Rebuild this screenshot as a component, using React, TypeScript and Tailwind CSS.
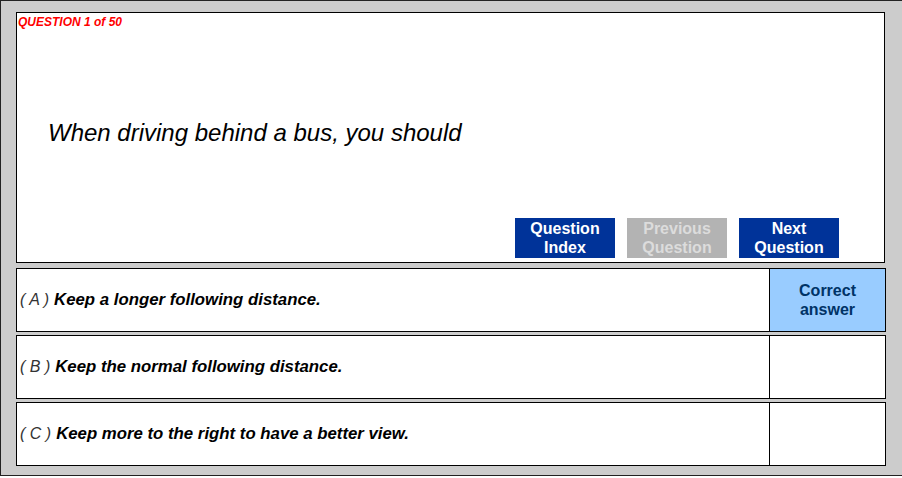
import * as React from "react";

const answers = [
  { letter: "A", text: "Keep a longer following distance.", correct: true },
  { letter: "B", text: "Keep the normal following distance.", correct: false },
  { letter: "C", text: "Keep more to the right to have a better view.", correct: false },
];

function NavButton({ top, bottom, disabled }: { top: string; bottom: string; disabled?: boolean }) {
  return (
    <div
      className={
        "flex h-[40px] w-[100px] flex-col items-center justify-center text-[16px] font-bold leading-[19px] " +
        (disabled ? "bg-[#b3b3b3] text-[#dcdcdc]" : "bg-[#003399] text-white")
      }
    >
      <span>{top}</span>
      <span>{bottom}</span>
    </div>
  );
}

export default function App() {
  return (
    <div className="h-[478px] w-[902px] bg-white" style={{ fontFamily: '"Liberation Sans", Arial, sans-serif' }}>
      <div className="h-[476px] w-[902px] border-b border-l border-t border-[#222] bg-[#cccccc] pl-[15px] pt-[11px]">
        {/* question panel */}
        <div className="flex h-[251px] w-[869px] flex-col border border-black bg-white">
          <div className="pl-[1px] pt-[2px] text-[12px] font-bold italic leading-[14px] text-[#ff0000]">
            QUESTION 1 of 50
          </div>
          <div className="mt-[90px] pl-[31px] text-[24px] italic leading-[28px] text-black">
            When driving behind a bus, you should
          </div>
          <div className="mt-auto mb-[4px] flex justify-end gap-[12px] pr-[45px]">
            <NavButton top="Question" bottom="Index" />
            <NavButton top="Previous" bottom="Question" disabled />
            <NavButton top="Next" bottom="Question" />
          </div>
        </div>

        {/* answers */}
        <div className="mt-[5px] flex w-[870px] flex-col gap-[3px]">
          {answers.map((a) => (
            <div key={a.letter} className="flex h-[64px] border border-black bg-white">
              <div className="flex flex-1 items-center pl-[3px] italic text-black">
                <span className="text-[16px] font-light text-[#333]">( {a.letter} )</span>
                <span className="ml-[5px] text-[16.8px] font-bold">{a.text}</span>
              </div>
              <div
                className={
                  "flex w-[116px] flex-col items-center justify-center border-l border-black text-[16px] font-bold leading-[19px] text-[#003366] " +
                  (a.correct ? "bg-[#99ccff]" : "bg-white")
                }
              >
                {a.correct && (
                  <>
                    <span>Correct</span>
                    <span>answer</span>
                  </>
                )}
              </div>
            </div>
          ))}
        </div>
      </div>
    </div>
  );
}
